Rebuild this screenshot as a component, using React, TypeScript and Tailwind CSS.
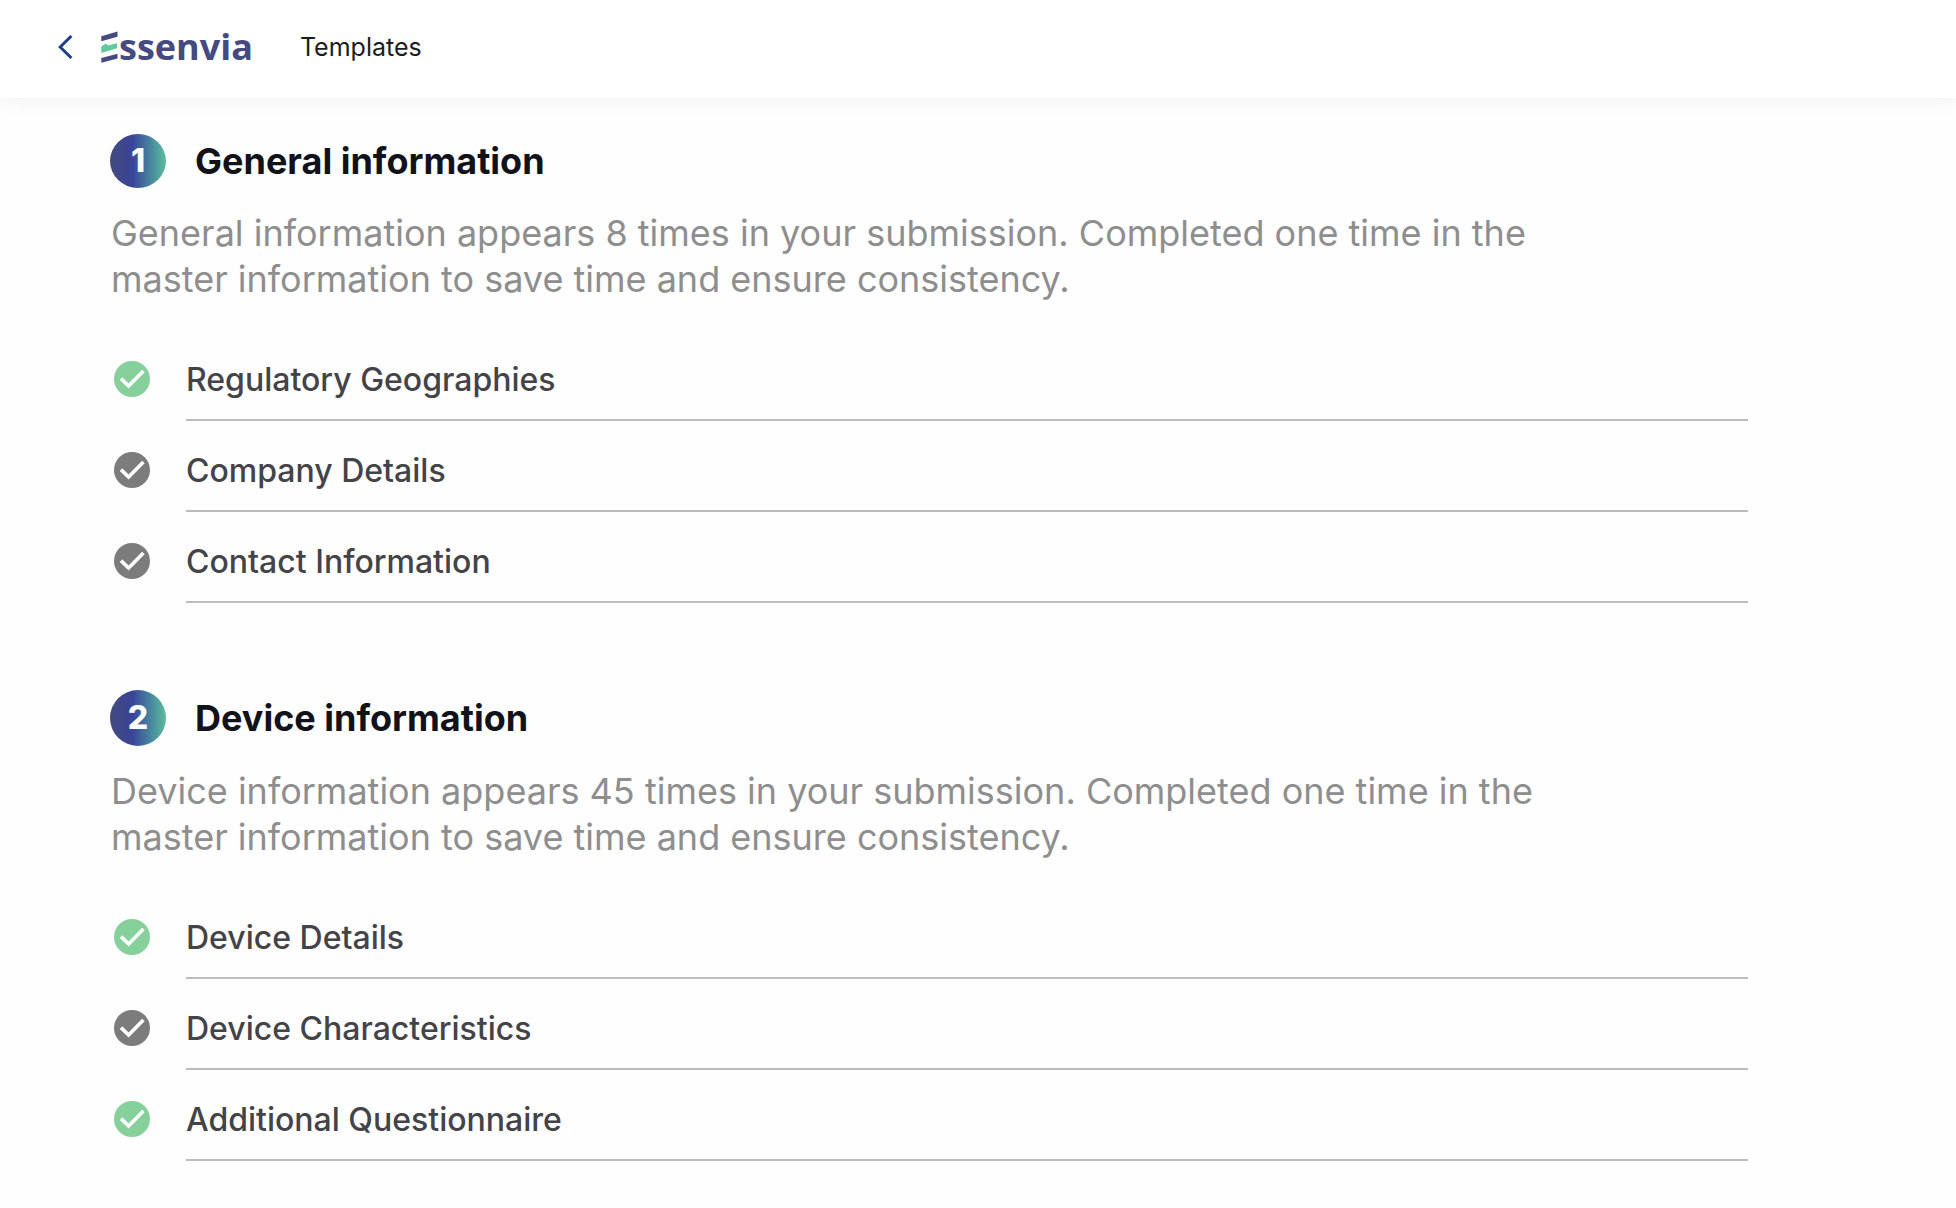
type Item = { label: string; done: boolean };
type SectionData = { title: string; description: string; badge: string; items: Item[] };

const sections: SectionData[] = [
  {
    title: 'General information',
    description:
      'General information appears 8 times in your submission. Completed one time in the master information to save time and ensure consistency.',
    badge: 'h-[54px]',
    items: [
      { label: 'Regulatory Geographies', done: true },
      { label: 'Company Details', done: false },
      { label: 'Contact Information', done: false },
    ],
  },
  {
    title: 'Device information',
    description:
      'Device information appears 45 times in your submission. Completed one time in the master information to save time and ensure consistency.',
    badge: 'h-14',
    items: [
      { label: 'Device Details', done: true },
      { label: 'Device Characteristics', done: false },
      { label: 'Additional Questionnaire', done: true },
    ],
  },
];

function CheckIcon({ done }: { done: boolean }) {
  return (
    <svg
      viewBox="0 0 36 36"
      className={done ? 'size-9 shrink-0 text-[#86d09b]' : 'size-9 shrink-0 text-[#7c7c7c]'}
      role="img"
      aria-label={done ? 'Complete' : 'Incomplete'}
    >
      <circle cx="18" cy="18" r="18" fill="currentColor" />
      <path d="M7 17.6 14.6 25 29.4 9.9" fill="none" stroke="#fff" strokeWidth="3.6" />
    </svg>
  );
}

function Logo() {
  return (
    <a href="#" aria-label="Essenvia" className="flex items-center text-[#454b80]">
      <svg viewBox="0 0 17 32" className="h-8 w-[17px]" aria-hidden="true">
        <path d="M0.3 5.2 16.5 0.6v5.2L0.3 10.2z" fill="currentColor" />
        <path d="M0.3 15.4 5 12.4 7 14.4 16 12.2v5L0.3 22z" fill="#5fcb9c" />
        <path d="M0.3 27 16.5 22.8v4.6L0.3 31.7z" fill="currentColor" />
      </svg>
      <span className="pl-px font-['Open_Sans',sans-serif] text-[36px] leading-[46px] font-bold">ssenvia</span>
    </a>
  );
}

function Section({ section, number }: { section: SectionData; number: number }) {
  return (
    <section>
      <div className="flex items-center gap-[29px]">
        <span
          className={`${section.badge} flex w-14 shrink-0 items-center justify-center rounded-[50%] bg-linear-to-r from-[#444a7e] via-[#394399] via-40% to-[#5bbd9a] text-[32px] leading-none font-extrabold text-white`}
        >
          {number}
        </span>
        <h2 className="text-[36px] leading-[46px] font-bold text-[#11121a]">{section.title}</h2>
      </div>
      <p className="mt-[22px] max-w-[1460px] pl-px text-[36px] leading-[46px] text-[#8e8e8e]">{section.description}</p>
      <ul className="mt-7">
        {section.items.map((item) => (
          <li key={item.label} className="flex gap-9 pl-1">
            <div className="pt-[31px]">
              <CheckIcon done={item.done} />
            </div>
            <a href="#" className="flex-1 border-b-2 border-[#bcbcbc] pt-[30px] pb-[19px] text-[32px] leading-10 font-medium text-[#434348]">
              {item.label}
            </a>
          </li>
        ))}
      </ul>
    </section>
  );
}

export default function App() {
  return (
    <div className="min-h-screen bg-[#fefefe] font-['Inter',sans-serif]">
      <header className="relative flex h-[98px] items-center bg-white pb-1 pl-[58px] shadow-[0_2px_20px_rgba(0,0,0,0.06)]">
        <button type="button" aria-label="Back" className="mr-7 text-[#1d4289]">
          <svg viewBox="0 0 15 24" className="h-6 w-[15px]" fill="none" stroke="currentColor" strokeWidth="3" aria-hidden="true">
            <path d="M13.4 1 2.2 12l11.2 11" />
          </svg>
        </button>
        <Logo />
        <nav className="pl-[47px]">
          <a href="#" className="text-[25px] leading-8 text-[#1c1c1c]">
            Templates
          </a>
        </nav>
      </header>
      <main className="flex flex-col gap-[87px] pt-9 pr-52 pb-12 pl-[110px]">
        {sections.map((section, index) => (
          <Section key={section.title} section={section} number={index + 1} />
        ))}
      </main>
    </div>
  );
}
